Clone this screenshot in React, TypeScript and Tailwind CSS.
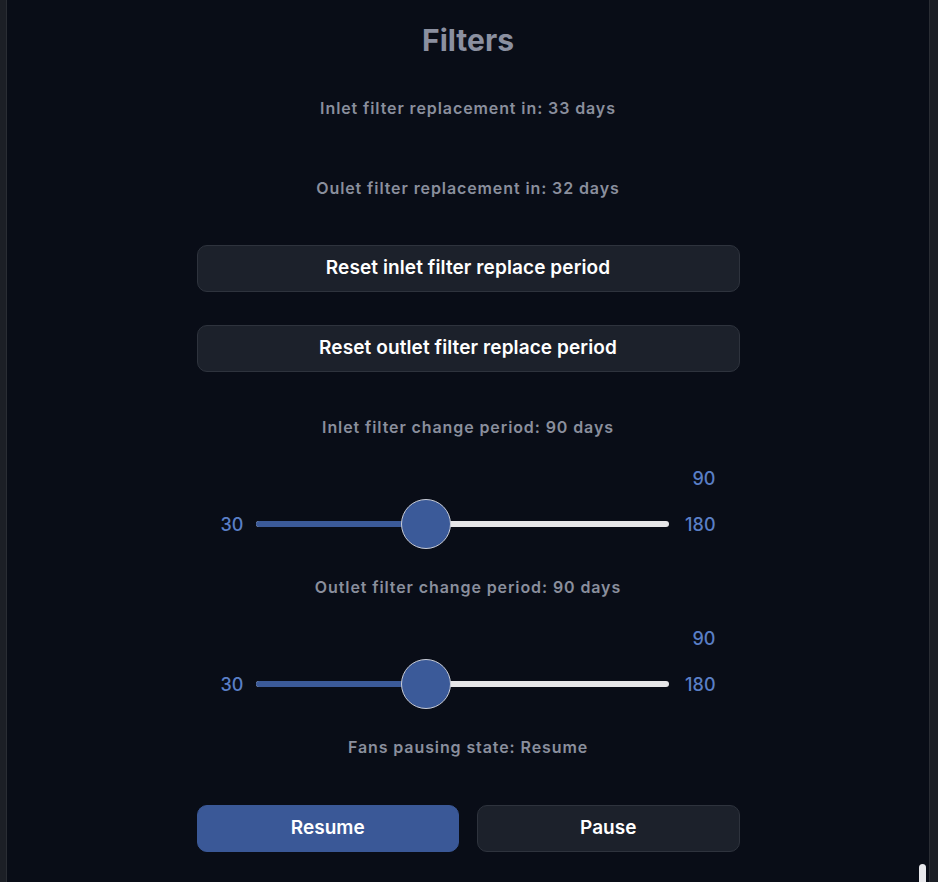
import { useState } from "react";

const font = { fontFamily: "Inter, 'Noto Sans', sans-serif" };

type SliderProps = {
  label: string;
  value: number;
  min: number;
  max: number;
  top: string;
};

const PeriodSlider = ({ label, value, min, max, top }: SliderProps) => {
  const percent = ((value - min) / (max - min)) * 100;

  return (
    <>
      <p className={`${top} text-[16px] leading-[20px] font-semibold tracking-[0.9px] text-[#8a8f9d]`}>
        {label}
      </p>
      <div className="mt-[30px] w-[543px] px-6 flex flex-col">
        <div className="self-end text-[18px] leading-[24px] font-medium text-[#5a7fc6]">
          {value}
        </div>
        <div className="mt-[8px] h-[50px] flex items-center gap-[13px]">
          <span className="w-[22px] text-[18px] font-medium text-[#5a7fc6]">{min}</span>
          <div className="relative flex-1 h-[6px] rounded-full bg-[#e6e6e8]">
            <div
              className="absolute left-0 top-0 h-full rounded-full bg-[#3b5a99]"
              style={{ width: `${percent}%` }}
            />
            <div
              className="absolute top-1/2 w-[50px] h-[50px] -translate-y-1/2 rounded-full bg-[#3b5a99] border-[1.5px] border-[#c9ccd6]"
              style={{ left: `calc(${percent}% - 20px)` }}
            />
          </div>
          <span className="ml-[3px] text-[18px] font-medium text-[#5a7fc6]">{max}</span>
        </div>
      </div>
    </>
  );
};

const App = () => {
  const [paused, setPaused] = useState(false);

  return (
    <div className="h-[882px] w-full flex bg-[#1c1f26] overflow-hidden" style={font}>
      <div className="w-[6px]" />
      <div className="relative flex-1 bg-[#090d17] border-x border-[#2a2d34] flex flex-col items-center">
        <h1 className="mt-[23px] text-[30px] leading-[34px] font-bold text-[#8b90a0]">Filters</h1>
        <p className="mt-[41px] text-[16px] leading-[20px] font-semibold tracking-[0.9px] text-[#8a8f9d]">
          Inlet filter replacement in: 33 days
        </p>
        <p className="mt-[60px] text-[16px] leading-[20px] font-semibold tracking-[0.9px] text-[#8a8f9d]">
          Oulet filter replacement in: 32 days
        </p>
        <button className="mt-[47px] w-[543px] h-[47px] rounded-[10px] bg-[#1c212b] border border-[#2e333d] text-[19px] font-semibold tracking-[0.1px] text-white">
          Reset inlet filter replace period
        </button>
        <button className="mt-[33px] w-[543px] h-[47px] rounded-[10px] bg-[#1c212b] border border-[#2e333d] text-[19px] font-semibold tracking-[0.1px] text-white">
          Reset outlet filter replace period
        </button>

        <PeriodSlider top="mt-[45px]" label="Inlet filter change period: 90 days" value={90} min={30} max={180} />
        <PeriodSlider top="mt-[28px]" label="Outlet filter change period: 90 days" value={90} min={30} max={180} />

        <p className="mt-[28px] text-[16px] leading-[20px] font-semibold tracking-[0.9px] text-[#8a8f9d]">
          Fans pausing state: {paused ? "Pause" : "Resume"}
        </p>
        <div className="mt-[48px] w-[543px] flex gap-[18px]">
          <button
            onClick={() => setPaused(false)}
            className="flex-1 h-[47px] rounded-[10px] bg-[#3a5897] border border-[#3a5897] text-[19px] font-semibold text-white"
          >
            Resume
          </button>
          <button
            onClick={() => setPaused(true)}
            className="flex-1 h-[47px] rounded-[10px] bg-[#1c212b] border border-[#2e333d] text-[19px] font-semibold text-white"
          >
            Pause
          </button>
        </div>

        <div className="absolute right-[3px] bottom-0 w-[7px] h-[18px] rounded-t-full bg-[#e8e8ec]" />
      </div>
      <div className="w-[8px]" />
    </div>
  );
};

export default App;
